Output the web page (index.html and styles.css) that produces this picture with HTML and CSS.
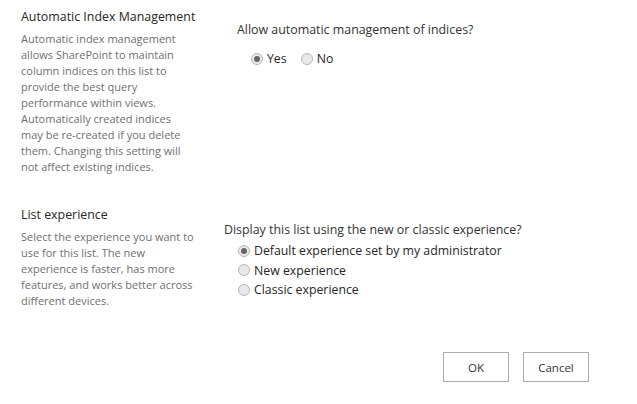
FILE: index.html
```html
<!DOCTYPE html>
<html>
<head>
<meta charset="utf-8">
<link rel="stylesheet" href="styles.css">
</head>
<body>
<div class="page">
  <section class="row row-index">
    <div class="info">
      <h3 class="title">Automatic Index Management</h3>
      <p class="desc">Automatic index management<br>allows SharePoint to maintain<br>column indices on this list to<br>provide the best query<br>performance within views.<br>Automatically created indices<br>may be re-created if you delete<br>them. Changing this setting will<br>not affect existing indices.</p>
    </div>
    <div class="control control-index">
      <div class="question">Allow automatic management of indices?</div>
      <div class="inline-options">
        <label class="option"><span class="radio checked"></span>Yes</label>
        <label class="option"><span class="radio"></span>No</label>
      </div>
    </div>
  </section>
  <section class="row row-exp">
    <div class="info">
      <h3 class="title">List experience</h3>
      <p class="desc">Select the experience you want to<br>use for this list. The new<br>experience is faster, has more<br>features, and works better across<br>different devices.</p>
    </div>
    <div class="control control-exp">
      <div class="question">Display this list using the new or classic experience?</div>
      <div class="stack-options">
        <label class="option"><span class="radio checked"></span>Default experience set by my administrator</label>
        <label class="option"><span class="radio"></span>New experience</label>
        <label class="option"><span class="radio"></span>Classic experience</label>
      </div>
    </div>
  </section>
  <div class="buttons">
    <button class="btn">OK</button>
    <button class="btn">Cancel</button>
  </div>
</div>
</body>
</html>
```

FILE: styles.css
```css
html, body {
  margin: 0;
  padding: 0;
  background: #ffffff;
}
body {
  font-family: "Open Sans", "Noto Sans", sans-serif;
  color: #333333;
}
.page {
  width: 637px;
  height: 404px;
  position: relative;
}
.row {
  display: flex;
}
.info {
  width: 178px;
  padding-left: 21px;
  flex: none;
}
.title {
  margin: 0;
  font-weight: normal;
  font-size: 12.4px;
  line-height: 18px;
  color: #262626;
  white-space: nowrap;
}
.desc {
  margin: 0;
  font-size: 11px;
  line-height: 16px;
  color: #6f6f6f;
  white-space: nowrap;
}
.row-index {
  padding-top: 8px;
}
.row-index .desc {
  margin-top: 5px;
}
.control-index {
  margin-left: 38px;
  padding-top: 13px;
}
.question {
  font-size: 12.4px;
  line-height: 18px;
  color: #333333;
}
.inline-options {
  display: flex;
  gap: 14px;
  margin-top: 10px;
  margin-left: 14px;
}
.option {
  display: flex;
  align-items: center;
  font-size: 12.3px;
  line-height: 19.5px;
  color: #262626;
}
.radio {
  width: 10px;
  height: 10px;
  border: 1px solid #b5b5b5;
  border-radius: 50%;
  background: #e9e9e9;
  margin-right: 4px;
  position: relative;
  flex: none;
}
.radio.checked::after {
  content: "";
  position: absolute;
  left: 2px;
  top: 2px;
  width: 6px;
  height: 6px;
  border-radius: 50%;
  background: #666666;
}
.row-exp {
  padding-top: 31px;
}
.row-exp .desc {
  margin-top: 5px;
}
.control-exp {
  margin-left: 25px;
  padding-top: 15px;
}
.stack-options {
  margin-left: 14px;
  margin-top: 2px;
  display: flex;
  flex-direction: column;
}
.buttons {
  display: flex;
  gap: 14px;
  justify-content: flex-end;
  padding-right: 48px;
  margin-top: 43px;
}
.btn {
  width: 66px;
  height: 30px;
  background: #ffffff;
  border: 1px solid #ababab;
  font-family: "Open Sans", "Noto Sans", sans-serif;
  font-size: 11.5px;
  color: #333333;
  padding: 0;
}
```
